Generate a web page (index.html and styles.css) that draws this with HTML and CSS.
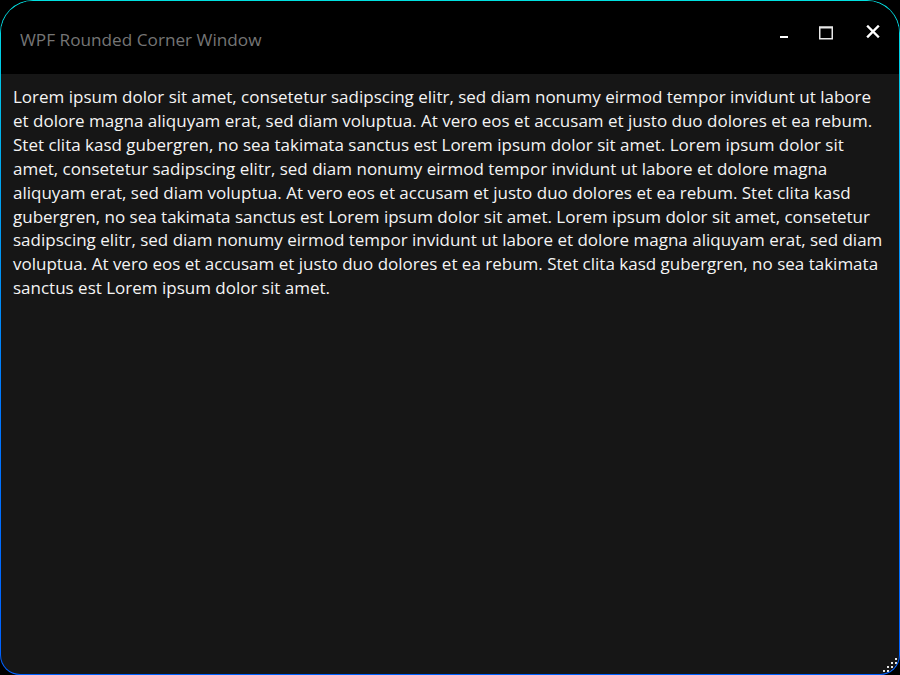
FILE: index.html
```html
<!DOCTYPE html>
<html>
<head>
<meta charset="utf-8">
<link rel="stylesheet" href="styles.css">
</head>
<body>
<div class="frame">
  <div class="window">
    <header class="titlebar">
      <div class="title">WPF Rounded Corner Window</div>
      <div class="controls">
        <button class="ctl" aria-label="Minimize">
          <svg width="12" height="12" viewBox="0 0 12 12"><rect x="2" y="9" width="8" height="2" fill="#fff"/></svg>
        </button>
        <button class="ctl" aria-label="Maximize">
          <svg width="16" height="16" viewBox="0 0 16 16"><rect x="1.75" y="2.25" width="12.5" height="11.5" fill="none" stroke="#e8e8e8" stroke-width="1.5"/><rect x="1" y="1.5" width="14" height="2" fill="#e8e8e8"/></svg>
        </button>
        <button class="ctl ctl-close" aria-label="Close">
          <svg width="16" height="16" viewBox="0 0 16 16"><path d="M3 1.5 L13 11.5 M13 1.5 L3 11.5" stroke="#fff" stroke-width="2.4" stroke-linecap="square"/></svg>
        </button>
      </div>
    </header>
    <main class="content">
      <p class="text">Lorem ipsum dolor sit amet, consetetur sadipscing elitr, sed diam nonumy eirmod tempor invidunt ut labore et dolore magna aliquyam erat, sed diam voluptua. At vero eos et accusam et justo duo dolores et ea rebum. Stet clita kasd gubergren, no sea takimata sanctus est Lorem ipsum dolor sit amet. Lorem ipsum dolor sit amet, consetetur sadipscing elitr, sed diam nonumy eirmod tempor invidunt ut labore et dolore magna aliquyam erat, sed diam voluptua. At vero eos et accusam et justo duo dolores et ea rebum. Stet clita kasd gubergren, no sea takimata sanctus est Lorem ipsum dolor sit amet. Lorem ipsum dolor sit amet, consetetur sadipscing elitr, sed diam nonumy eirmod tempor invidunt ut labore et dolore magna aliquyam erat, sed diam voluptua. At vero eos et accusam et justo duo dolores et ea rebum. Stet clita kasd gubergren, no sea takimata sanctus est Lorem ipsum dolor sit amet.</p>
      <svg class="grip" width="18" height="18" viewBox="0 0 18 18">
        <g fill="#e6e6e6">
          <rect x="14" y="2" width="2" height="2"/>
          <rect x="10" y="6" width="2" height="2"/><rect x="14" y="6" width="2" height="2"/>
          <rect x="6" y="10" width="2" height="2"/><rect x="10" y="10" width="2" height="2"/><rect x="14" y="10" width="2" height="2"/>
          <rect x="2" y="14" width="2" height="2"/><rect x="6" y="14" width="2" height="2"/><rect x="10" y="14" width="2" height="2"/><rect x="14" y="14" width="2" height="2"/>
        </g>
      </svg>
    </main>
  </div>
</div>
</body>
</html>
```

FILE: styles.css
```css
html, body {
  margin: 0;
  padding: 0;
  background: #000;
  width: 900px;
  height: 675px;
  overflow: hidden;
}

.frame {
  width: 900px;
  height: 675px;
  box-sizing: border-box;
  padding: 1px;
  border-radius: 33px 33px 20px 20px;
  background: linear-gradient(to bottom, #00e0e0 0%, #00a8f0 25%, #0078ff 60%, #0060ff 100%);
}

.window {
  width: 100%;
  height: 100%;
  border-radius: 32px 32px 19px 19px;
  overflow: hidden;
  display: flex;
  flex-direction: column;
  background: #161616;
}

.titlebar {
  height: 73px;
  flex: none;
  background: #000;
  display: flex;
  align-items: flex-start;
  justify-content: space-between;
}

.title {
  margin: 28px 0 0 19px;
  color: #757575;
  font-family: "Open Sans", "Noto Sans", sans-serif;
  font-size: 17.2px;
  line-height: 22px;
}

.controls {
  display: flex;
  margin: 23px 0 0 0;
}

.ctl {
  width: 42px;
  height: 18px;
  padding: 0;
  border: 0;
  background: transparent;
  display: flex;
  align-items: center;
  justify-content: center;
}

.ctl-close {
  width: 52px;
}

.content {
  flex: 1;
  position: relative;
  padding: 11px 12px 0 12px;
}

.text {
  margin: 0;
  color: #f4f4f4;
  font-family: "Open Sans", "Noto Sans", sans-serif;
  font-size: 17px;
  line-height: 23.9px;
}

.grip {
  position: absolute;
  right: 0;
  bottom: 0;
}
```
